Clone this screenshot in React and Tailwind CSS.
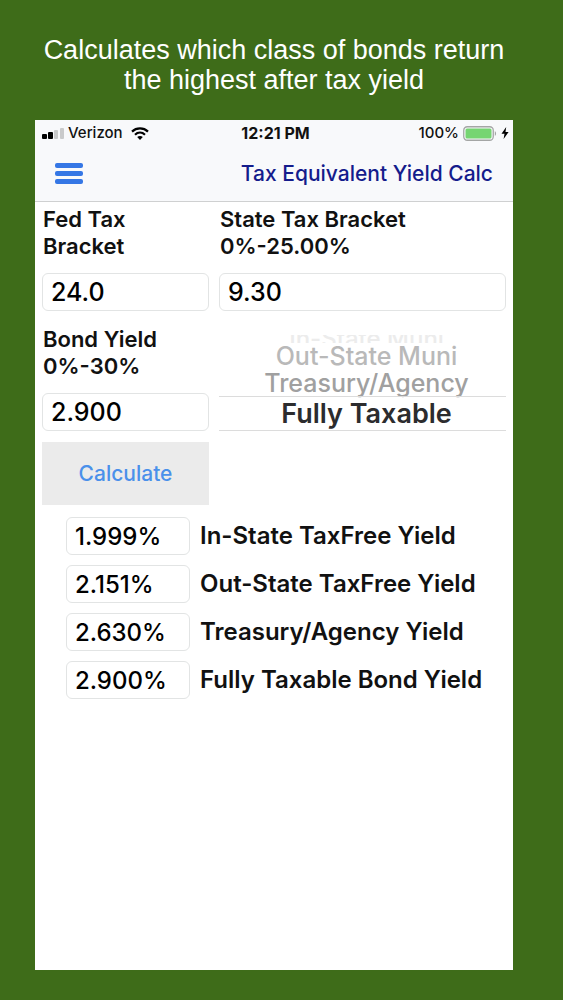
import React, { useState } from 'react';

const BOND_CLASSES = [
  { name: 'In-State Muni', style: 'h-2 overflow-hidden text-[24px] leading-2 font-medium text-[#ececec]' },
  { name: 'Out-State Muni', style: 'h-[27px] text-[25px] leading-[27px] font-medium text-[#b9b9b9]' },
  { name: 'Treasury/Agency', style: 'h-[26px] text-[25px] leading-[26px] font-medium text-[#a0a0a0]' },
  { name: 'Fully Taxable', style: 'h-[35px] text-[27px] leading-[33px] font-semibold text-[#2c2c2e] border-y border-[#dcdcdc]' },
];

const RESULTS = [
  { id: 'in-state', label: 'In-State TaxFree Yield', value: '1.999%' },
  { id: 'out-state', label: 'Out-State TaxFree Yield', value: '2.151%' },
  { id: 'treasury', label: 'Treasury/Agency Yield', value: '2.630%' },
  { id: 'taxable', label: 'Fully Taxable Bond Yield', value: '2.900%' },
];

const inputStyle = 'w-full h-[38px] px-2 rounded-md border border-[#e2e4e4] bg-white font-medium text-black outline-none';

function StatusBar() {
  return (
    <div className="grid grid-cols-[1fr_auto_1fr] items-center h-[26px] pl-[7px] pr-1 text-[15px] font-medium text-[#111]">
      <div className="flex items-center gap-1">
        <svg width="22" height="12" viewBox="0 0 22 12" aria-hidden="true">
          <rect x="0" y="7" width="5" height="5" rx="1" fill="#000" />
          <rect x="6" y="5" width="5" height="7" rx="1" fill="#000" />
          <rect x="12" y="3" width="4" height="9" rx="1" fill="#c9cacb" />
          <rect x="18" y="1" width="4" height="11" rx="1" fill="#c9cacb" />
        </svg>
        <span>Verizon</span>
        <svg className="ml-1" width="18" height="13" viewBox="0 0 18 13" aria-hidden="true">
          <path d="M1 4.600C5.500 .4 12.500 .4 17 4.600" fill="none" stroke="#000" strokeWidth="2.200" />
          <path d="M4 7.700C6.900 5 11.100 5 14 7.700" fill="none" stroke="#000" strokeWidth="2.200" />
          <path d="M9 13L6.200 10.100C7.800 8.700 10.200 8.700 11.800 10.100Z" fill="#000" />
        </svg>
      </div>
      <span className="text-[16px] font-bold">12:21 PM</span>
      <div className="flex items-center justify-end gap-1">
        <span>100%</span>
        <svg width="34" height="15" viewBox="0 0 34 15" aria-hidden="true">
          <rect x=".75" y=".75" width="29.500" height="13.500" rx="3.500" fill="none" stroke="#a4a6a5" strokeWidth="1.300" />
          <rect x="2.500" y="2.500" width="26" height="10" rx="1.500" fill="#76d572" />
          <path d="M31.800 5.200C33.500 5.800 33.500 9.200 31.800 9.800Z" fill="#a4a6a5" />
        </svg>
        <svg width="8" height="12" viewBox="0 0 8 12" aria-hidden="true">
          <path d="M5.200 0L.5 6.800H3.500L2.600 12L7.600 4.900H4.500Z" fill="#000" />
        </svg>
      </div>
    </div>
  );
}

function NavBar() {
  return (
    <div className="flex items-center justify-between h-14 px-5 border-b border-[#cfd0d1]">
      <button type="button" aria-label="Menu" className="flex flex-col gap-[3px]">
        <span className="block w-7 h-[5px] rounded-xs bg-[#3577e5]" />
        <span className="block w-7 h-[5px] rounded-xs bg-[#3577e5]" />
        <span className="block w-7 h-[5px] rounded-xs bg-[#3577e5]" />
      </button>
      <h1 className="text-[21px] font-medium text-[#141c8c]">Tax Equivalent Yield Calc</h1>
    </div>
  );
}

function BondPicker() {
  const [selected, setSelected] = useState('Fully Taxable');

  return (
    <fieldset aria-label="Bond class" className="self-end flex flex-col text-center">
      {BOND_CLASSES.map(({ name, style }) => (
        <label key={name} className={`flex justify-center pl-2 whitespace-nowrap ${style}`}>
          <input
            type="radio"
            name="bond-class"
            className="appearance-none w-0"
            checked={selected === name}
            onChange={() => setSelected(name)}
          />
          {name}
        </label>
      ))}
    </fieldset>
  );
}

function Field({ id, title, hint, value }) {
  return (
    <div>
      <label htmlFor={id} className="block mb-[13px] px-px text-[22px] leading-[27px] font-semibold text-[#111]">
        {title}<br />{hint}
      </label>
      <input id={id} defaultValue={value} inputMode="decimal" className={`${inputStyle} text-[25px]`} />
    </div>
  );
}

export default function App() {
  return (
    <div className="min-h-screen flex flex-col bg-[#3e6c19] pl-[35px] pr-[50px] pt-[35px] pb-[30px] font-['Inter',sans-serif]">
      <p className="mb-[25px] text-center text-[27px] leading-[30px] text-white font-['Liberation_Sans',sans-serif]">
        Calculates which class of bonds return<br />the highest after tax yield
      </p>

      <div className="flex-1 bg-white">
        <header className="bg-[#f8f9fb]">
          <StatusBar />
          <NavBar />
        </header>

        <main className="px-[7px] pt-1">
          <div className="grid grid-cols-[167fr_287fr] gap-x-[10px] gap-y-[15px]">
            <Field id="fed" title="Fed Tax" hint="Bracket" value="24.0" />
            <Field id="state" title="State Tax Bracket" hint="0%-25.00%" value="9.30" />
            <Field id="yield" title="Bond Yield" hint="0%-30%" value="2.900" />
            <BondPicker />
          </div>

          <div className="grid grid-cols-[167fr_287fr] gap-x-[10px] mt-[11px]">
            <button type="button" className="h-[63px] bg-[#ebebeb] text-[21px] font-medium text-[#4a90ea]">Calculate</button>
          </div>

          <div className="flex flex-col gap-[10px] mt-3 pl-6">
            {RESULTS.map(({ id, label, value }) => (
              <div key={id} className="flex items-center gap-[10px]">
                <div className="w-[124px] shrink-0">
                  <input id={id} value={value} readOnly className={`${inputStyle} text-[24px]`} />
                </div>
                <label htmlFor={id} className="text-[24px] font-semibold text-[#111] whitespace-nowrap">{label}</label>
              </div>
            ))}
          </div>
        </main>
      </div>
    </div>
  );
}
